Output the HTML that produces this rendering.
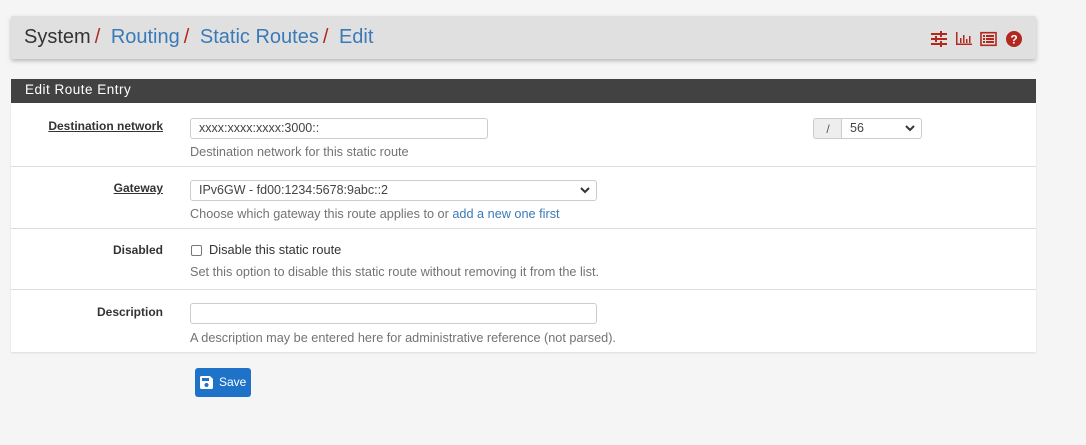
<!DOCTYPE html>
<html><head><style>
*{box-sizing:border-box;margin:0;padding:0}
body{width:1086px;height:445px;background:#f5f5f5;font-family:"Liberation Sans",Arial,sans-serif;position:relative;overflow:hidden;font-size:12px;color:#333}
.a{position:absolute}
.bc{left:11px;top:16px;width:1025px;height:43px;background:#e0e0e0;box-shadow:0 2px 4px rgba(0,0,0,.25);border-radius:2px}
.bc .t{left:13px;top:10px;font-size:20px;color:#333;white-space:nowrap}
.bc .t a{color:#3b7ab8}
.bc .t s{text-decoration:none;color:#b0281e;margin:0 5px 0 4px}
.ph{left:11px;top:79px;width:1025px;height:24px;background:#424242;color:#fff;font-size:13.5px;padding:3px 0 0 14px;letter-spacing:.5px}
.pb{left:11px;top:103px;width:1025px;height:249px;background:#fff;box-shadow:0 1px 2px rgba(0,0,0,.1)}
.sep{left:11px;width:1025px;height:1px;background:#ddd}
.lb{width:163px;text-align:right;font-weight:bold;font-size:12px;color:#333;left:0}
.lb.u{text-decoration:underline}
.hp{left:190px;color:#737373;font-size:12.7px;white-space:nowrap}
.in{border:1px solid #ccc;border-radius:3px;background:#fff;font-size:12.5px;padding:2px 8px;color:#444;white-space:nowrap}
.chev{position:absolute;right:6px;top:4px}
</style></head><body>
<div class="a bc"><div class="a t">System<s>/</s> <a>Routing</a><s>/</s> <a>Static Routes</a><s>/</s> <a>Edit</a></div>
<svg class="a" style="left:919px;top:14px" width="100" height="18" viewBox="0 0 100 18">
<g fill="#b0281e">
<rect x="1" y="3" width="16" height="2"/><rect x="1" y="8" width="16" height="2"/><rect x="1" y="13" width="16" height="2"/>
<rect x="10" y="1" width="2" height="6"/><rect x="5" y="6" width="2" height="6"/><rect x="10" y="11" width="2" height="6"/>
<rect x="26" y="2" width="1.5" height="13"/><rect x="26" y="13.5" width="16" height="1.5"/>
<rect x="30" y="8" width="1.5" height="5"/><rect x="33" y="5" width="1.5" height="8"/><rect x="36" y="9" width="1.5" height="4"/><rect x="39" y="6" width="1.5" height="7"/>
</g>
<rect x="51" y="2.7" width="15" height="12.6" fill="none" stroke="#b0281e" stroke-width="1.6"/>
<g fill="#b0281e"><rect x="53" y="5" width="2" height="2"/><rect x="56" y="5" width="8" height="2"/><rect x="53" y="8" width="2" height="2"/><rect x="56" y="8" width="8" height="2"/><rect x="53" y="11" width="2" height="2"/><rect x="56" y="11" width="8" height="2"/>
<circle cx="84" cy="9" r="8"/></g>
<text x="84" y="13.5" text-anchor="middle" fill="#fff" font-size="12" font-weight="bold" font-family="Liberation Sans">?</text>
</svg></div>

<div class="a ph">Edit Route Entry</div>
<div class="a pb"></div>
<div class="a sep" style="top:166px"></div>
<div class="a sep" style="top:228px"></div>
<div class="a sep" style="top:289px"></div>

<div class="a lb u" style="top:119px">Destination network</div>
<div class="a in" style="left:190px;top:118px;width:298px;height:21px">xxxx:xxxx:xxxx:3000::</div>
<div class="a hp" style="top:145px">Destination network for this static route</div>
<div class="a" style="left:813px;top:118px;width:29px;height:21px;background:#eee;border:1px solid #ccc;border-right:none;border-radius:3px 0 0 3px;text-align:center;padding-top:3px;color:#555">/</div>
<div class="a in" style="left:841px;top:118px;width:81px;height:21px;border-radius:0 3px 3px 0">56<svg class="chev" width="10" height="10" viewBox="0 0 10 10"><path d="M1 3l4 4 4-4" fill="none" stroke="#333" stroke-width="2"/></svg></div>

<div class="a lb u" style="top:181px">Gateway</div>
<div class="a in" style="left:190px;top:180px;width:407px;height:21px">IPv6GW - fd00:1234:5678:9abc::2<svg class="chev" width="10" height="10" viewBox="0 0 10 10"><path d="M1 3l4 4 4-4" fill="none" stroke="#333" stroke-width="2"/></svg></div>
<div class="a hp" style="top:207px">Choose which gateway this route applies to or <span style="color:#3b7ab8">add a new one first</span></div>

<div class="a lb" style="top:243px">Disabled</div>
<div class="a" style="left:191px;top:245px;width:11px;height:11px;border:1px solid #777;border-radius:2px;background:#fff"></div>
<div class="a" style="left:209px;top:242px;color:#333;font-size:12.8px">Disable this static route</div>
<div class="a hp" style="top:265px">Set this option to disable this static route without removing it from the list.</div>

<div class="a lb" style="top:305px">Description</div>
<div class="a in" style="left:190px;top:303px;width:407px;height:21px"></div>
<div class="a hp" style="top:331px">A description may be entered here for administrative reference (not parsed).</div>

<div class="a" style="left:195px;top:368px;width:56px;height:29px;background:#1e73c8;border-radius:3px;color:#fff;font-size:12px;padding:7px 0 0 24px">Save
<svg style="position:absolute;left:5px;top:8px" width="13" height="13" viewBox="0 0 13 13"><path d="M0 1.5A1.5 1.5 0 0 1 1.5 0H10l3 3v8.5A1.5 1.5 0 0 1 11.5 13h-10A1.5 1.5 0 0 1 0 11.5z" fill="#fff"/><rect x="2" y="2" width="7" height="3" fill="#1e73c8"/><circle cx="6.5" cy="9" r="2" fill="#1e73c8"/></svg></div>
</body></html>
